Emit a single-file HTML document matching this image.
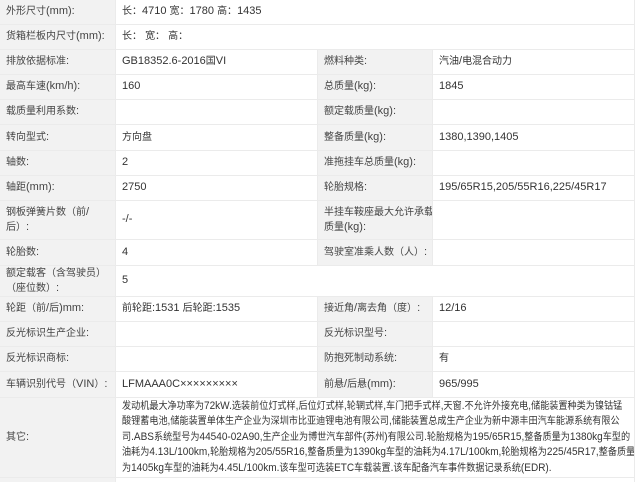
<!DOCTYPE html>
<html><head><meta charset="utf-8"><style>
html,body{margin:0;padding:0;width:640px;height:482px;overflow:hidden;background:#fff;}
body{font-family:"Liberation Sans","Noto Sans CJK SC",sans-serif;font-size:11px;color:#333;position:relative;}
.c{position:absolute;box-sizing:border-box;border-bottom:1px solid #ebebeb;border-right:1px solid #ebebeb;display:flex;align-items:center;padding-left:6px;line-height:15.5px;white-space:nowrap;overflow:hidden;}
.l{background:#f2f2f2;color:#444;}
.v{background:#fff;}
.k{font-size:10px;}
</style></head><body>
<div id="t"></div>
<script>
var rows=[
[0,25,"外形尺寸(mm):","长：4710 宽：1780 高：1435"],
[25,25,"货箱栏板内尺寸(mm):","长：&nbsp;宽：&nbsp;高："],
[50,25,"排放依据标准:","GB18352.6-2016国VI","燃料种类:","汽油/电混合动力"],
[75,25,"最高车速(km/h):","160","总质量(kg):","1845"],
[100,25,"载质量利用系数:","","额定载质量(kg):",""],
[125,26,"转向型式:","方向盘","整备质量(kg):","1380,1390,1405"],
[151,25,"轴数:","2","准拖挂车总质量(kg):",""],
[176,25,"轴距(mm):","2750","轮胎规格:","195/65R15,205/55R16,225/45R17"],
[201,39,"钢板弹簧片数（前/<br>后）:","-/-","半挂车鞍座最大允许承载<br>质量(kg):",""],
[240,26,"轮胎数:","4","驾驶室准乘人数（人）:",""],
[266,31,"额定载客（含驾驶员）<br>（座位数）:","5"],
[297,25,"轮距（前/后)mm:","前轮距:1531 后轮距:1535","接近角/离去角（度）:","12/16"],
[322,25,"反光标识生产企业:","","反光标识型号:",""],
[347,25,"反光标识商标:","","防抱死制动系统:","有"],
[372,26,"车辆识别代号（VIN）:","LFMAAA0C×××××××××","前悬/后悬(mm):","965/995"],
[398,80,"其它:","发动机最大净功率为72kW.选装前位灯式样,后位灯式样,轮辋式样,车门把手式样,天窗.不允许外接充电,储能装置种类为镍钴锰<br>酸锂蓄电池,储能装置单体生产企业为深圳市比亚迪锂电池有限公司,储能装置总成生产企业为新中源丰田汽车能源系统有限公<br>司.ABS系统型号为44540-02A90,生产企业为博世汽车部件(苏州)有限公司.轮胎规格为195/65R15,整备质量为1380kg车型的<br>油耗为4.13L/100km,轮胎规格为205/55R16,整备质量为1390kg车型的油耗为4.17L/100km,轮胎规格为225/45R17,整备质量<br>为1405kg车型的油耗为4.45L/100km.该车型可选装ETC车载装置.该车配备汽车事件数据记录系统(EDR)."],
[478,10,"",""]
];
function k(s){return s.replace(/([\u3000-\u9fff\uff00-\uffef]+)/g,'<span class="k">$1</span>');}
var h="";
rows.forEach(function(r){
 var t=r[0],ht=r[1],s='top:'+t+'px;height:'+ht+'px;';
 h+='<div class="c l" style="'+s+'left:0;width:116px;"><div>'+k(r[2])+'</div></div>';
 if(r.length>4){
  h+='<div class="c v" style="'+s+'left:116px;width:202px;"><div>'+k(r[3])+'</div></div>';
  h+='<div class="c l" style="'+s+'left:318px;width:115px;"><div>'+k(r[4])+'</div></div>';
  h+='<div class="c v" style="'+s+'left:433px;width:202px;"><div>'+k(r[5])+'</div></div>';
 } else {
  h+='<div class="c v" style="'+s+'left:116px;width:519px;"><div id="'+(t==398?'o':'')+'">'+k(r[3])+'</div></div>';
 }
});
document.getElementById("t").innerHTML=h;
var o=document.getElementById("o");
if(o){var w=o.scrollWidth;o.style.transformOrigin="0 50%";o.style.transform="scaleX("+(513/w)+")";}
</script>
</body></html>
